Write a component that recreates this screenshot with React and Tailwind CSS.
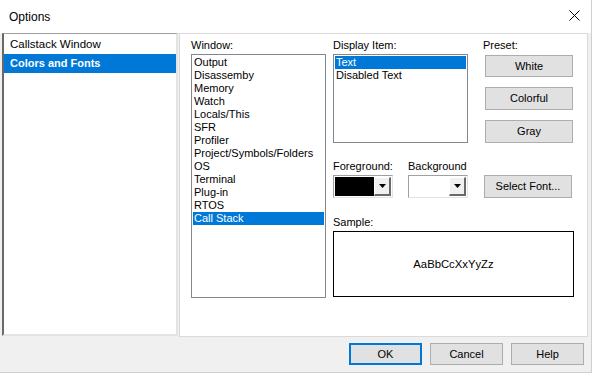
import React from 'react';

const WINDOWS = [
  'Output',
  'Disassemby',
  'Memory',
  'Watch',
  'Locals/This',
  'SFR',
  'Profiler',
  'Project/Symbols/Folders',
  'OS',
  'Terminal',
  'Plug-in',
  'RTOS',
  'Call Stack',
];

const ITEMS = ['Text', 'Disabled Text'];

const Button = ({ children, className = '', primary = false }) => (
  <button
    type="button"
    className={`h-[22px] bg-[#e1e1e1] text-black leading-none ${
      primary ? 'border-2 border-[#0078d7]' : 'border border-[#adadad]'
    } ${className}`}
  >
    {children}
  </button>
);

const ListBox = ({ items, selected, className = '' }) => (
  <div className={`bg-white border border-[#828790] p-px ${className}`}>
    {items.map((it) => (
      <div
        key={it}
        className={`h-[13px] leading-[13px] pl-px ${
          it === selected ? 'bg-[#0078d7] text-white' : 'text-black'
        }`}
      >
        {it}
      </div>
    ))}
  </div>
);

// Colour picker combo: swatch plus the little drop button
const ColorCombo = ({ color }) => (
  <div className="w-[60px] h-[23px] flex border border-t-[#a0a0a0] border-l-[#a0a0a0] border-b-[#e3e3e3] border-r-[#e3e3e3] bg-white p-px">
    <div className={`flex-1 ${color}`} />
    <div className="w-[17px] flex items-center justify-center bg-[#f0f0f0] border-r-2 border-b-2 border-r-[#696969] border-b-[#696969] border-t border-l border-t-white border-l-white">
      <svg width="7" height="4" viewBox="0 0 7 4">
        <path d="M0 0h7L3.5 4z" fill="#000" />
      </svg>
    </div>
  </div>
);

export default function App() {
  return (
    <div
      className="w-[592px] h-[373px] bg-[#f0f0f0] flex flex-col text-[11px] text-black border-r border-b border-[#cfcfcf] overflow-hidden"
      style={{ fontFamily: '"Liberation Sans", Arial, sans-serif' }}
    >
      {/* Title bar */}
      <div className="h-[33px] bg-white flex items-center justify-between pl-[9px] pr-[11px] shrink-0">
        <span className="text-[12px]">Options</span>
        <svg width="11" height="11" viewBox="0 0 11 11" className="mt-[-2px]">
          <path d="M0.5 0.5l10 10M10.5 0.5l-10 10" stroke="#000" strokeWidth="1" />
        </svg>
      </div>

      {/* Body */}
      <div className="flex gap-[1px] pl-[2px] h-[304px] shrink-0">
        {/* Category list */}
        <div className="w-[176px] h-[303px] bg-white border-t border-l-2 border-t-[#a0a0a0] border-l-[#696969] border-r-2 border-b-2 border-r-[#e3e3e3] border-b-[#e3e3e3]">
          <div className="h-[20px] flex items-center pl-[6px] text-[11.5px] pt-px">Callstack Window</div>
          <div className="h-[19px] flex items-center pl-[6px] bg-[#0078d7] text-white font-bold text-[11px]">
            Colors and Fonts
          </div>
        </div>

        {/* Settings page */}
        <div className="w-[409px] h-[304px] bg-white border border-[#dadada] flex pl-[11px] pt-[3px]">
          <div className="w-[135px] flex flex-col">
            <div className="h-[17px] leading-[17px]">Window:</div>
            <ListBox items={WINDOWS} selected="Call Stack" className="h-[244px]" />
          </div>

          <div className="ml-[7px] w-[241px] flex flex-col">
            <div className="flex">
              <div className="w-[135px] flex flex-col">
                <div className="h-[17px] leading-[17px]">Display Item:</div>
                <ListBox items={ITEMS} selected="Text" className="h-[89px]" />
              </div>
              <div className="ml-[14px] flex-1 flex flex-col">
                <div className="h-[18px] leading-[17px] pl-[1px]">Preset:</div>
                <div className="flex flex-col gap-[10px] pl-[3px]">
                  <Button className="w-[88px] h-[22px]">White</Button>
                  <Button className="w-[88px] h-[23px]">Colorful</Button>
                  <Button className="w-[88px] h-[23px]">Gray</Button>
                </div>
              </div>
            </div>

            <div className="flex mt-[15px]">
              <div className="w-[75px] flex flex-col">
                <div className="h-[17px] leading-[17px]">Foreground:</div>
                <ColorCombo color="bg-black" />
              </div>
              <div className="w-[76px] flex flex-col">
                <div className="h-[17px] leading-[17px]">Background</div>
                <ColorCombo color="bg-white" />
              </div>
              <div className="flex flex-col justify-end">
                <Button className="w-[88px] h-[23px]">Select Font...</Button>
              </div>
            </div>

            <div className="h-[17px] leading-[17px] mt-[16px]">Sample:</div>
            <div className="w-[241px] h-[66px] border border-black flex items-center justify-center text-[11.3px]">
              AaBbCcXxYyZz
            </div>
          </div>
        </div>
      </div>

      {/* Dialog buttons */}
      <div className="flex justify-end gap-[8px] pr-[7px] mt-[6px]">
        <Button primary className="w-[73px]">OK</Button>
        <Button className="w-[73px]">Cancel</Button>
        <Button className="w-[73px]">Help</Button>
      </div>
    </div>
  );
}
